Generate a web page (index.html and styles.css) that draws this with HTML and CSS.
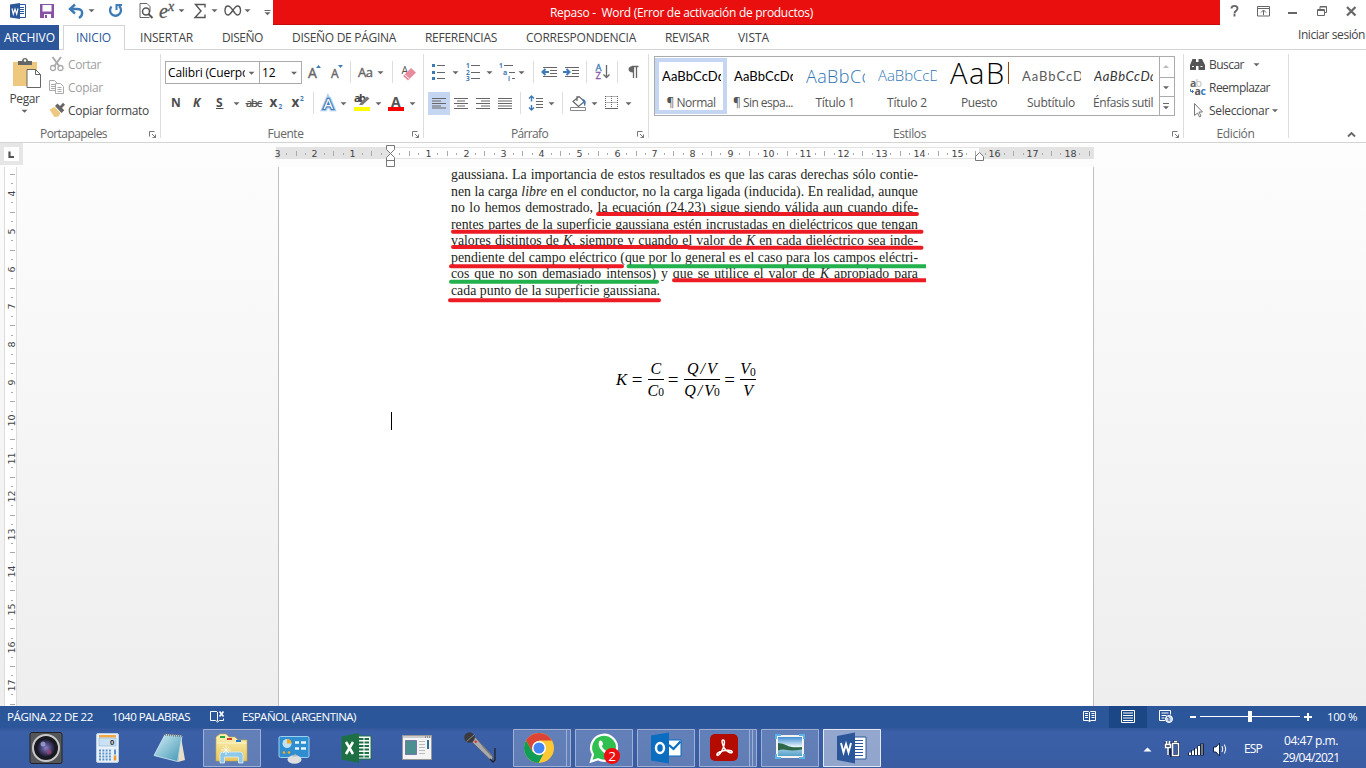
FILE: index.html
```html
<!DOCTYPE html>
<html lang="es">
<head>
<meta charset="utf-8">
<title>Repaso - Word</title>
<link rel="stylesheet" href="styles.css">
</head>
<body>
<svg class="defs" width="0" height="0">
  <defs>
    <path id="dd" d="M-3-1.2h6L0 1.8z" fill="#666"/>
    <g id="launch" fill="none" stroke="#777"><path d="M.5 5.500V.5h5"/><path d="M3 3l3.500 3.500M6.500 3.500v3h-3"/></g>
    <linearGradient id="folder" x1="0" y1="0" x2="0" y2="1"><stop offset="0" stop-color="#fdf3b8"/><stop offset="1" stop-color="#e8c65c"/></linearGradient>
    <linearGradient id="note" x1="0" y1="0" x2="1" y2="1"><stop offset="0" stop-color="#d5f0f7"/><stop offset="1" stop-color="#3f95b3"/></linearGradient>
    <linearGradient id="photo" x1="0" y1="0" x2="0" y2="1"><stop offset="0" stop-color="#2f83cf"/><stop offset=".5" stop-color="#e6f4fb"/><stop offset=".65" stop-color="#8fc3dd"/><stop offset="1" stop-color="#4f9cc6"/></linearGradient>
    <radialGradient id="lens"><stop offset="0" stop-color="#8a7fc4"/><stop offset=".5" stop-color="#4a4478"/><stop offset="1" stop-color="#14141f"/></radialGradient>
  </defs>
</svg>
<div class="app">
  <header class="titlebar">
    <svg width="273" height="25" viewBox="0 0 273 25">
      <path d="M18 4.500h7.500v13H18" fill="#fff" stroke="#2b579a"/><path d="M20 7.500h4M20 9.500h4M20 11.500h4M20 13.500h4" stroke="#2b579a"/>
      <path d="M10 4.500l10-1.500v16l-10-1.500z" fill="#2b579a"/><path d="M12 8.500l1.300 5.500 1.700-5 1.700 5 1.300-5.500" fill="none" stroke="#fff" stroke-width="1.200"/>
      <path d="M40 4h14v14H40z" fill="#8653a7"/><path d="M42.500 5h9v6.500h-9zM44 14h7v4h-7z" fill="#fff"/><path d="M45 15h2v3h-2z" fill="#8653a7"/>
      <path d="M75 4.500l-5 4.500 5 4.500M70.500 9H77c7 0 6 6.500 2 9" fill="none" stroke="#3e7ab5" stroke-width="2.400"/>
      <use href="#dd" x="91.500" y="10.500"/>
      <path d="M111.500 6.500a5.500 5.500 0 1 0 7.500-.5" fill="none" stroke="#3e7ab5" stroke-width="2.300"/><path d="M115.500 5h6.500M116.500 4v6" fill="none" stroke="#3e7ab5" stroke-width="2"/>
      <path d="M149.500 17.500h-9.500v-14h7l3 3v5" fill="none" stroke="#666"/><circle cx="146" cy="11.500" r="3.500" fill="none" stroke="#555" stroke-width="1.500"/><path d="M148.500 14l4 4" stroke="#555" stroke-width="2"/>
      <text class="serif" x="159" y="17.500" font-size="20" font-style="italic" fill="#555" stroke="#555" stroke-width=".3">e</text><text class="serif" x="168" y="10.500" font-size="14" font-style="italic" fill="#555" stroke="#555" stroke-width=".3">x</text>
      <use href="#dd" x="181.500" y="10.500"/>
      <path d="M205 7.500V4.500h-9.500l5.500 6.500-6 6.500h10v-3" fill="none" stroke="#555" stroke-width="1.400"/>
      <use href="#dd" x="214.500" y="10.500"/>
      <path d="M233 10.500c-2-3-3.500-4.500-5-4.500-4 0-4 9 0 9 3.500 0 6-9 9.500-9 4 0 4 9 0 9-1.500 0-2.500-1.500-4.500-4.500z" fill="none" stroke="#555" stroke-width="1.400"/>
      <use href="#dd" x="247.500" y="10.500"/>
      <path d="M264.500 10.500h6" stroke="#666"/><use href="#dd" x="267.500" y="13.500"/>
    </svg>
    <div class="doc-title"><span class="fit" data-w="263">Repaso -&nbsp; Word (Error de activación de productos)</span></div>
    <svg width="146" height="25" viewBox="1220 0 146 25" fill="none" stroke="#666">
      <path d="M1231.500 8.500c0-3.500 6-3.500 6 0 0 2.500-3 2-3 5M1234.500 14v2.500" stroke-width="1.900"/>
      <path d="M1257.500 6.500h12v9.500h-12zM1257.500 8.500h12M1263.500 15v-4.500M1261 12.500l2.500-2.500 2.500 2.500"/>
      <path d="M1288 13h9" stroke-width="2"/>
      <path d="M1317.500 9.500h7v6h-7zM1317 10.500h8M1320 9V6.500h6.500v6H1325M1320 7h6.500"/>
      <path d="M1347 7l8.500 8.500M1355.500 7l-8.500 8.500" stroke-width="2.200"/>
    </svg>
  </header>

  <nav class="tabs">
    <div class="tab-file"><span class="fit" data-w="51">ARCHIVO</span></div>
    <div class="tab-active"><span class="fit" data-w="35">INICIO</span></div>
    <div class="tab-list">
      <span class="fit" data-w="53">INSERTAR</span><span class="fit" data-w="41">DISEÑO</span><span class="fit" data-w="104">DISEÑO DE PÁGINA</span><span class="fit" data-w="72">REFERENCIAS</span><span class="fit" data-w="110">CORRESPONDENCIA</span><span class="fit" data-w="44">REVISAR</span><span class="fit" data-w="31">VISTA</span>
    </div>
    <div class="signin"><span class="fit" data-w="67">Iniciar sesión</span></div>
  </nav>

  <section class="ribbon">
    <div class="group g-clip">
      <div class="body">
        <div class="paste">
          <svg width="50" height="42" viewBox="0 50 50 42">
            <path d="M13 62h24v24H13z" fill="#edc87e"/><path d="M18 65v-4h4c0-4 6-4 6 0h4v4z" fill="#666"/><circle cx="25" cy="60.500" r="1.200" fill="#fff"/>
            <path d="M27 69.500h8.500l5 5v13H27z" fill="#fff" stroke="#666"/><path d="M35.500 69.500v5h5" fill="none" stroke="#666"/>
          </svg>
          <span class="fit" data-w="30">Pegar</span>
          <svg width="50" height="8" viewBox="0 0 50 8"><use href="#dd" x="24.500" y="5"/></svg>
        </div>
        <div class="rows">
          <div class="cmd off"><svg width="20" height="23" viewBox="48 53 20 23" fill="none" stroke="#aaa"><path d="M52.500 57l7 9.500M61 57l-7 9.500" stroke-width="2"/><circle cx="53" cy="68" r="2.500" stroke-width="1.300"/><circle cx="60.500" cy="68" r="2.500" stroke-width="1.300"/></svg><span class="fit" data-w="33">Cortar</span></div>
          <div class="cmd off"><svg width="20" height="23" viewBox="48 76 20 23" fill="#fff" stroke="#aaa"><path d="M49.500 80.500h5l3 3v7h-8z"/><path d="M51 84.500h4M51 86.500h4M51 88.500h4"/><path d="M55.500 83.500h5l3 3v7h-8z"/><path d="M57.500 87.500h4M57.500 89.500h4M57.500 91.500h4"/></svg><span class="fit" data-w="35">Copiar</span></div>
          <div class="cmd"><svg width="20" height="23" viewBox="48 99 20 23"><path d="M49.500 109.500l5-2.500 6 6-2 3.500-4 .5z" fill="#edc87e"/><path d="M55 106l2.500-2.500 2.500 2.500 3-3.200 2 2-3 3.200 2.300 2.300-2.800 2.700z" fill="#666"/></svg><span class="fit" data-w="81">Copiar formato</span></div>
        </div>
      </div>
      <div class="glabel"><i></i><span class="fit" data-w="67">Portapapeles</span><svg width="13" height="16" viewBox="0 0 13 16"><use href="#launch" x="2" y="5"/></svg></div>
    </div>

    <div class="group g-font">
      <div class="line combos">
        <div class="combo font"><span>Calibri (Cuerpo)</span><svg width="14" height="21" viewBox="0 0 14 21"><use href="#dd" x="6.500" y="11"/></svg></div>
        <div class="combo size"><span>12</span><svg width="13" height="21" viewBox="0 0 13 21"><use href="#dd" x="6" y="11"/></svg></div>
        <svg class="ui" width="120" height="26" viewBox="302 60 120 26">
          <g fill="#666" stroke="#666" stroke-width=".4"><text x="308" y="78" font-size="14">A</text><text x="331" y="78" font-size="12">A</text><text x="358" y="76.500" font-size="13" textLength="15">Aa</text></g>
          <path d="M316 68l2.500-3 2.500 3zM338 65l2.500 3 2.500-3z" fill="#3e7ab5"/>
          <path d="M350.500 61v22M392.500 61v22" stroke="#ddd"/><use href="#dd" x="380.500" y="72.500"/>
          <text x="401.500" y="74" font-size="10.500" fill="#555">A</text><path d="M403 76l8-8 5 4.500-8 8z" fill="#e88b9c"/><path d="M404.500 74.500l5 4.500" stroke="#fff"/>
        </svg>
      </div>
      <div class="line">
        <svg class="ui" width="262" height="28" viewBox="161 89 262 28">
          <g fill="#4d4d4d" font-weight="bold" font-size="12"><text x="171" y="107">N</text><text x="193" y="107" font-style="italic">K</text><text x="216" y="107">S</text><text x="269.500" y="107" font-size="13.500">x</text><text x="291.500" y="107" font-size="13.500">x</text></g>
          <path d="M216 108.500h7.500" stroke="#4d4d4d"/><use href="#dd" x="236.500" y="103.500"/>
          <text x="246" y="107" font-size="11" fill="#444" textLength="16" stroke="#444" stroke-width=".2">abc</text><path d="M245.500 103.500h17" stroke="#555"/>
          <text x="278.500" y="109" font-size="6.500" font-weight="bold" fill="#3e7ab5">2</text><text x="300" y="101" font-size="6.500" font-weight="bold" fill="#3e7ab5">2</text>
          <path d="M313.500 92v22" stroke="#ddd"/>
          <text x="323.500" y="108.500" font-size="15" fill="#fff" stroke="#a9caee" stroke-width="4.500" paint-order="stroke">A</text><text x="323.500" y="108.500" font-size="15" fill="#fff" stroke="#3e7ab5" stroke-width="2.200" paint-order="stroke">A</text>
          <use href="#dd" x="343.500" y="103.500"/>
          <text x="354" y="102" font-size="11" font-weight="bold" fill="#444" textLength="12">ab</text><path d="M359 105l2-3 6-5.500 2.500 2-7 6.500z" fill="#777"/><path d="M354 107h16v4h-16z" fill="#ff0"/>
          <use href="#dd" x="378.500" y="103.500"/>
          <text x="391" y="107" font-size="14" font-weight="bold" fill="#555">A</text><path d="M388 107h16v4h-16z" fill="red"/><use href="#dd" x="412.500" y="103.500"/>
        </svg>
      </div>
      <div class="glabel"><i></i><span class="fit" data-w="36">Fuente</span><svg width="13" height="16" viewBox="0 0 13 16"><use href="#launch" x="2" y="5"/></svg></div>
    </div>

    <div class="group g-para">
      <div class="line">
        <svg class="ui" width="224" height="26" viewBox="424 60 224 26" fill="none" stroke="#666">
          <path d="M437 65.500h8M437 72.500h8M437 78.500h8"/><path d="M432 65.500h3M432 72.500h3M432 78.500h3" stroke="#3e7ab5" stroke-width="3"/>
          <path d="M471 65.500h9M471 72.500h9M471 78.500h9"/><g fill="#3e7ab5" stroke="none" font-weight="bold" font-size="6.500"><text x="466" y="68">1</text><text x="466" y="74.500">2</text><text x="466" y="81">3</text><text x="499" y="68">1</text><text x="503" y="74.500" font-size="7">a</text><text x="508" y="81">i</text></g>
          <path d="M504 65.500h9M509 72.500h6M512 78.500h3"/>
          <use href="#dd" x="455.500" y="72.500" stroke="none"/><use href="#dd" x="489.500" y="72.500" stroke="none"/><use href="#dd" x="521.500" y="72.500" stroke="none"/>
          <path d="M533.500 61v22M586.500 61v22M617.500 61v22" stroke="#ddd"/>
          <path d="M543 67.500h14M550 70.500h7M550 73.500h7M543 76.500h14M565 67.500h14M572 70.500h7M572 73.500h7M565 76.500h14"/>
          <path d="M549 72H543M545.500 69l-3 3 3 3M563 72h6M566.500 69l3 3-3 3" stroke="#3e7ab5" stroke-width="2"/>
          <g stroke-width=".3" font-size="9.500"><text x="595.500" y="71" fill="#3e7ab5" stroke="#3e7ab5">A</text><text x="595.500" y="79" fill="#8653a7" stroke="#8653a7">Z</text></g><path d="M606.500 65v12M603.500 74.500l3 3 3-3" stroke-width="1.300"/>
          <path d="M633.500 78V66.500M636.500 78V66.500M632 66.500h6.500" stroke-width="1.300"/><path d="M633 66c-6 0-6 6.500 0 6.500z" fill="#666" stroke="none"/>
        </svg>
      </div>
      <div class="line">
        <svg width="224" height="28" viewBox="424 89 224 28" fill="none" stroke="#666">
          <path d="M428 92h22v23h-22z" fill="#c5d6f2" stroke="none"/>
          <path d="M432 98.500h14M432 101h9M432 103.500h14M432 106h9M432 108h14M454 98.500h14M457 101h8M454 103.500h14M457 106h8M454 108.500h14M476 98.500h14M481 101h9M476 103.500h14M481 106h9M476 108.500h14M498 98.500h14M498 101h14M498 103.500h14M498 106h14M498 108.500h14"/>
          <path d="M520.500 92v22M562.500 92v22" stroke="#ddd"/>
          <path d="M536 98.500h7M536 101.500h7M536 104.500h7M536 107.500h7"/><path d="M531.500 96.500v5M531.500 105v5M529 98.500l2.500-2.500 2.500 2.500M529 107.500l2.500 2.500 2.500-2.500" stroke="#3e7ab5" stroke-width="1.400"/>
          <path d="M573 101.500l6-5 5.500 5-6 5zM577 101v-5" stroke-width="1.200"/><path d="M582 99c3.500-.5 5 4 2.500 7.500l-1-4z" fill="#3e7ab5" stroke="none"/><path d="M570.500 107.500h15v3h-15z" stroke="#888"/>
          <path d="M605.500 96.500h12M605.500 102.500h12M605.500 96v12M611.500 96v12M617.500 96v12" stroke-dasharray="1 1"/><path d="M605 108.500h13"/>
          <use href="#dd" x="551.500" y="103.500" stroke="none"/><use href="#dd" x="594.500" y="103.500" stroke="none"/><use href="#dd" x="628.500" y="103.500" stroke="none"/>
        </svg>
      </div>
      <div class="glabel"><i></i><span class="fit" data-w="37">Párrafo</span><svg width="13" height="16" viewBox="0 0 13 16"><use href="#launch" x="2" y="5"/></svg></div>
    </div>

    <div class="group g-styles">
      <div class="gallery">
        <div class="style sel"><svg class="cal" width="59" height="35" viewBox="0 0 59 35"><text x="0" y="24" font-size="13" textLength="63">AaBbCcDd</text></svg><span class="fit" data-w="49">¶ Normal</span></div>
        <div class="style"><svg class="cal" width="59" height="35" viewBox="0 0 59 35"><text x="0" y="24" font-size="13" textLength="63">AaBbCcDd</text></svg><span class="fit" data-w="60">¶ Sin espa...</span></div>
        <div class="style"><svg class="cal light blue" width="59" height="35" viewBox="0 0 59 35"><text x="0" y="26" font-size="18" textLength="64">AaBbCc</text></svg><span class="fit" data-w="39">Título 1</span></div>
        <div class="style"><svg class="cal light blue" width="59" height="35" viewBox="0 0 59 35"><text x="0" y="24" font-size="15" textLength="62">AaBbCcD</text></svg><span class="fit" data-w="40">Título 2</span></div>
        <div class="style"><svg class="cal light" width="59" height="35" viewBox="0 0 59 35"><text x="0" y="26.500" font-size="29" textLength="73">AaBb</text></svg><span class="fit" data-w="36">Puesto</span></div>
        <div class="style"><svg class="cal gray" width="59" height="35" viewBox="0 0 59 35"><text x="0" y="24" font-size="13" textLength="61">AaBbCcD</text></svg><span class="fit" data-w="48">Subtítulo</span></div>
        <div class="style"><svg class="cal" width="59" height="35" viewBox="0 0 59 35"><text x="0" y="24" font-size="13" font-style="italic" textLength="63" fill="#333">AaBbCcDd</text></svg><span class="fit" data-w="60">Énfasis sutil</span></div>
        <svg class="scroll" width="15" height="58" viewBox="0 0 15 58"><path d="M.5 0v58M0 20.500h15M0 39.500h15" stroke="#ababab"/><path d="M4 11h6L7 8z" fill="#bbb"/><use href="#dd" x="7" y="30.500"/><path d="M4 46.500h6" stroke="#666"/><use href="#dd" x="7" y="50.500"/></svg>
      </div>
      <div class="glabel"><i></i><span class="fit" data-w="33">Estilos</span><svg width="13" height="16" viewBox="0 0 13 16"><use href="#launch" x="2" y="5"/></svg></div>
    </div>

    <div class="group g-edit">
      <div class="rows">
        <div class="cmd"><svg width="20" height="23" viewBox="1189 53 20 23"><path d="M1190 70v-5l2.500-6h3.500v11zM1198.500 70V59h3.500l3 6v5z" fill="#555"/><path d="M1195 62h5v4h-5z" fill="#555"/><path d="M1192 66.500h2M1200.500 66.500h2" stroke="#fff"/></svg><span class="fit" data-w="35">Buscar</span><svg width="22" height="23"><use href="#dd" x="12.500" y="11.500"/></svg></div>
        <div class="cmd"><svg class="ui" width="20" height="23" viewBox="1189 76 20 23"><g font-size="10.500" font-weight="bold"><text x="1190" y="87" fill="#666">a</text><text x="1195.500" y="87" fill="#bbb" font-weight="normal">b</text><text x="1194.500" y="94.500" fill="#555">a</text><text x="1200.500" y="94.500" fill="#3e7ab5">c</text></g><path d="M1190.500 89v2.500h3M1192 90l1.500 1.500-1.500 1.500" fill="none" stroke="#3e7ab5"/></svg><span class="fit" data-w="61">Reemplazar</span></div>
        <div class="cmd"><svg width="20" height="23" viewBox="1189 99 20 23"><path d="M1194.500 103.500v12l3-2.500 2 4 1.500-1-2-4h3.500z" fill="#fff" stroke="#777"/></svg><span class="fit" data-w="60">Seleccionar</span><svg width="10" height="23"><use href="#dd" x="6" y="11.500"/></svg></div>
      </div>
      <div class="glabel"><span class="fit" data-w="38">Edición</span></div>
    </div>
    <svg class="collapse" width="77" height="92" viewBox="1289 50 77 92"><path d="M1348 136.500l3.500-3.500 3.500 3.500" fill="none" stroke="#666" stroke-width="1.800"/></svg>
  </section>

  <main class="workspace">
    <div class="hruler-row">
      <div class="corner"><div><svg width="14" height="14"><path d="M5.500 4.500v5.500H10" fill="none" stroke="#555" stroke-width="2.200"/></svg></div></div>
      <svg id="hruler" class="ruler" width="830" height="24" viewBox="270 143 830 24">
        <path d="M276 147h818v12H276z" fill="#e3e3e3"/><path d="M390 148h589v10H390z" fill="#fff"/>
      </svg>
    </div>
    <div class="view">
      <svg id="vruler" class="ruler" width="24" height="539" viewBox="0 167 24 539"><path d="M4.500 167v539M16.500 167v539" stroke="#dcdcdc"/><path d="M5 167h11v539H5z" fill="#fff"/></svg>
      <article class="page">
        <div class="excerpt">
          <p>gaussiana. La importancia de estos resultados es que las caras derechas sólo contie-</p>
          <p>nen la carga <em>libre</em> en el conductor, no la carga ligada (inducida). En realidad, aunque</p>
          <p>no lo hemos demostrado, la ecuación (24.23) sigue siendo válida aun cuando dife-</p>
          <p>rentes partes de la superficie gaussiana estén incrustadas en dieléctricos que tengan</p>
          <p>valores distintos de <em>K</em>, siempre y cuando el valor de <em>K</em> en cada dieléctrico sea inde-</p>
          <p>pendiente del campo eléctrico (que por lo general es el caso para los campos eléctri-</p>
          <p>cos que no son demasiado intensos) y que se utilice el valor de <em>K</em> apropiado para</p>
          <p class="last">cada punto de la superficie gaussiana.</p>
          <svg class="marks" width="480" height="139" viewBox="446 167 480 139" fill="none" stroke="#ed1c24" stroke-width="4" stroke-linecap="round">
            <path d="M598 213.900h319M453 231.800h468.500M453 247h236M689 247.700h232.500M451 266.200h171M674 280.200h252M450 300.300h209"/>
            <path d="M628.500 266.200h297.500M451 281.800h206" stroke="#22b14c"/>
          </svg>
        </div>
        <div class="equation">
          <span class="k">K</span><span class="eq">=</span>
          <span class="frac f1"><span>C</span><span>C<sub>0</sub></span></span><span class="eq">=</span>
          <span class="frac f2"><span>Q<b>/</b>V</span><span>Q<b>/</b>V<sub>0</sub></span></span><span class="eq">=</span>
          <span class="frac f3"><span>V<sub>0</sub></span><span>V</span></span>
        </div>
        <div class="caret"></div>
      </article>
    </div>
  </main>

  <footer class="status">
    <span class="fit" data-w="86">PÁGINA 22 DE 22</span><span class="fit words" data-w="78">1040 PALABRAS</span>
    <svg width="52" height="22" viewBox="191 706 52 22" fill="none" stroke="#fff"><path d="M218 711.500h-6.500v9h5l2 1.500 2-1.500h4v-2M218.500 712v9"/><path d="M220.500 711.500l4 5M224.500 711.500l-4 5" stroke-width="1.600"/></svg>
    <span class="fit" data-w="114">ESPAÑOL (ARGENTINA)</span>
    <svg class="viewtools" width="253" height="22" viewBox="1074 706 253 22" fill="none" stroke="#fff">
      <path d="M1109 706h38v22h-38z" fill="#1b4787" stroke="none"/>
      <path d="M1083.500 711.500h5l1 1 1-1h5v9h-5l-1 1.500-1-1.500h-5zM1089.500 712v10M1085 713.500h3M1085 715.500h3M1085 717.500h3M1091.500 713.500h3M1091.500 715.500h3M1091.500 717.500h3"/>
      <path d="M1121.500 710.500h13v12h-13zM1123 713h10M1123 715.500h10M1123 718h10M1123 720.500h10"/>
      <path d="M1165 720.500h-5.500v-10h11v4M1161.500 713h7M1161.500 715.500h5M1161.500 718h3"/><circle cx="1169" cy="719" r="3.500" fill="#c6d2e6"/><path d="M1167 717l2 1v3" stroke="#2b579a"/>
      <path d="M1190 717h6M1304 717h8M1308 713v8" stroke-width="2"/><path d="M1200 716.500h100"/><path d="M1248 711h4v11h-4z" fill="#fff" stroke="none"/>
    </svg>
    <span class="fit" data-w="30">100 %</span>
  </footer>

  <footer class="taskbar">
    <svg width="1230" height="40" viewBox="0 728 1230 40">
      <g fill="#fff" fill-opacity=".2" stroke="#9fb0d4"><path d="M203.500 729.500h57v37h-57zM513.500 729.500h53v37h-53zM575.500 729.500h57v37h-57zM637.500 729.500h57v37h-57zM699.500 729.500h50v37h-50zM761.500 729.500h57v37h-57z"/><path d="M566.500 729.500h4v37h-4zM749.500 729.500h3v37h-3zM752.500 729.500h4v37h-4z"/><path d="M823.500 729.500h57v37h-57z" fill-opacity=".45" stroke="#e3e8f3"/></g>
      <!-- webcam -->
      <rect x="30" y="732.500" width="32" height="31" rx="2" fill="#55565a" stroke="#222"/><circle cx="46" cy="748" r="13" fill="#191a1f" stroke="#c8c8ca" stroke-width="2"/><circle cx="46" cy="748" r="9.500" fill="url(#lens)"/><circle cx="43" cy="744" r="2.500" fill="#a9b8e8" opacity=".7"/><circle cx="49" cy="752" r="2.500" fill="#a04570" opacity=".7"/>
      <!-- calculator -->
      <rect x="96.500" y="733.500" width="22" height="29" rx="1.500" fill="#e8f1f9" stroke="#b9cde0"/><path d="M99 735h17v2.500H99z" fill="#f5a742"/><path d="M99 738h17v8H99z" fill="#c9e1f3" stroke="#8eb1d0" stroke-width=".6"/><text class="uit" x="110" y="745" font-size="7.500" font-weight="bold" fill="#333">0</text><path d="M99 750.500h13M99 753.500h13M99 756.500h13M99 759.500h13" stroke="#5b94c9" stroke-width="2" stroke-dasharray="2 1.300"/><path d="M115 749.500v5" stroke="#5b94c9" stroke-width="2"/><path d="M115 755.500v5" stroke="#f09a2a" stroke-width="2.500"/>
      <!-- notepad -->
      <path d="M181 737l4 23-7 2z" fill="#e9dfc6"/><path d="M165 734.500l17 1.500-4.500 25.500-23.500-6z" fill="url(#note)" stroke="#d7eaf0" stroke-width=".8"/><path d="M165 734.500l17 1.500" stroke="#777" stroke-width="2.500" stroke-dasharray="1 1"/>
      <!-- file explorer -->
      <path d="M216 741v-4l4-3h6l3 3h6l3 3h9v21h-31z" fill="url(#folder)" stroke="#c9a548" stroke-width=".6"/><path d="M220 737h5" stroke="#28a745" stroke-width="2"/><path d="M227 739h5" stroke="#d83b2c" stroke-width="2"/><path d="M236 741h5" stroke="#1e7bd0" stroke-width="2"/><path d="M217 743h29" stroke="#fff7cf"/><path d="M220 763v-8q0-3 3-3h17q3 0 3 3v8h-4.500v-6h-14v6z" fill="#8fc9ea" stroke="#d9f0fb" stroke-width=".8"/><path d="M226 745v10M221 750h10M223 747l6 6M229 747l-6 6" stroke="#fff" stroke-width=".7"/>
      <!-- control panel -->
      <rect x="279" y="736.500" width="30" height="21" rx="1.500" fill="#2f8ed0" stroke="#9bd0f0"/><circle cx="287" cy="743.500" r="4.500" fill="#bfe2f7"/><path d="M287 743.500v-4.500a4.500 4.500 0 0 1 4.500 4.500z" fill="#f7a823"/><path d="M295 742.500h4M301 742.500h5M295 748.500h4M301 748.500h5" stroke="#e9f6fd" stroke-width="2.300"/><circle cx="284" cy="752.500" r="1.300" fill="#f7a823"/><circle cx="289" cy="752.500" r="1.300" fill="#f7a823"/><ellipse cx="294.500" cy="759.500" rx="7" ry="4.300" fill="#dedede"/><path d="M292 757l3-3 3 2z" fill="#bbb"/>
      <!-- excel -->
      <path d="M358 736h13v23h-13z" fill="#fff" stroke="#1d7044"/><path d="M359 739h10M359 742.500h10M359 746h10M359 749.500h10M359 753h10M359 756.500h10" stroke="#1d7044" stroke-width="1.800" stroke-dasharray="4.500 1"/><path d="M341.500 736.500l17.500-3.500v30l-17.500-3.500z" fill="#1d7044"/><path d="M346 742l7 12M353 742l-7 12" stroke="#fff" stroke-width="2.500"/>
      <!-- window app -->
      <path d="M402.500 735.500h29v24h-29z" fill="#f4f4f4" stroke="#999"/><path d="M403 737h28" stroke="#ccc" stroke-width="2"/><path d="M425 737h5" stroke="#555" stroke-dasharray="1 1"/><path d="M405.500 740.500h11v14h-11z" fill="#4b9090" stroke="#77a"/><path d="M419 741.500h6M419 744.500h6M419 747.500h6M419 750.500h6M419 753.500h6" stroke="#bbb"/><path d="M428 740v9" stroke="#2f6e9b" stroke-width="2"/>
      <!-- microphone -->
      <path d="M471 741l4-4 18 20-1.500 4z" fill="#a9aaad" stroke="#555" stroke-width=".7"/><circle cx="469.500" cy="737.500" r="5.300" fill="#3a3a3c"/><path d="M466.500 741.500l8-7" stroke="#888"/><path d="M475 741l1.500 1.500" stroke="#e22" stroke-width="2"/><path d="M482 745l10 11" stroke="#777" stroke-width="1.500"/><path d="M490 759l3 3 2-2v-12" fill="none" stroke="#222" stroke-width="1.300"/>
      <!-- chrome -->
      <circle cx="539" cy="748" r="15" fill="#fcc934"/><path d="M526 740.500a15 15 0 0 1 26 0H539z" fill="#db4437"/><path d="M526 740.500l6.500 11.300 1-8 5.500-3.300 1-4z" fill="#db4437"/><path d="M526 740.500l6.500 11.300 6.500 3.700 4.500-1.500-5 9a15 15 0 0 1-12.500-22.500z" fill="#0f9d58"/><circle cx="539" cy="748" r="7" fill="#fff"/><circle cx="539" cy="748" r="5.500" fill="#4285f4"/>
      <!-- whatsapp -->
      <path d="M591 761.500l2-7a13 13 0 1 1 5 4.700z" fill="#2fc04f" stroke="#fff" stroke-width="2.200"/><path d="M599 741.500c2-2 3-1 4 2 .5 1.500-1.500 2-1 3 1 2 2.500 3.500 5 4.500 1 .2 1.500-2 2.500-1.500 3 1.500 4 2 2 4-4 4.500-15-5-12.500-12z" fill="#fff"/><circle cx="612" cy="756" r="8" fill="#f00f0f"/><text class="uit" x="608.300" y="760.700" font-size="13.500" fill="#fff">2</text>
      <!-- outlook -->
      <path d="M668 740h13v16h-13z" fill="#fff" stroke="#0a6dc0"/><path d="M669 745l4.500 4 7-7.500" fill="none" stroke="#0a6dc0" stroke-width="2.200"/><path d="M651 735.500l18-3v31l-18-3z" fill="#0a6dc0"/><ellipse cx="660" cy="748" rx="4" ry="5" fill="none" stroke="#fff" stroke-width="2.500"/>
      <!-- acrobat -->
      <rect x="710" y="734" width="28" height="27" rx="5" fill="#b30b00"/><path d="M723 740c-2 0-.5 5 1.500 8.500 2 3 6.500 5 7.500 4 1-1.500-2-2.500-5-2.200-5 .2-10.500 2.200-10 4.700.5 1.500 4-1.500 6-6.500 1.800-4.500 2-8.500 0-8.500z" fill="none" stroke="#fff" stroke-width="1.500"/>
      <!-- pictures -->
      <path d="M777 736h26v21h-26z" fill="url(#photo)" stroke="#f3f3f0" stroke-width="2"/><path d="M778 743q5 0 9 2.500t15 1.500v2.500q-10 1.500-15 .5t-9 .5z" fill="#2f6848"/><path d="M776 739v-4h5M799 735h5v4M776 754v4h5M799 758h5v-4" fill="none" stroke="#5cb3e5" stroke-width="2"/>
      <!-- word -->
      <path d="M853 737h13v22h-13z" fill="#fff" stroke="#2b579a"/><path d="M855 740.500h8M855 743.500h8M855 746.500h8M855 749.500h8M855 752.500h8M855 755.500h8" stroke="#2b579a" stroke-width="1.200"/><path d="M837 736l18-3.500v31l-18-3.500z" fill="#2b579a"/><path d="M841 743l2.500 9.500 2.500-8.500 2.500 8.500 2.500-9.500" fill="none" stroke="#fff" stroke-width="1.900"/>
      <!-- tray -->
      <path d="M1143.500 751.500h8l-4-4z" fill="#fff"/>
      <g fill="none" stroke="#14254a" stroke-width="3"><path d="M1171.500 743.500h7v12h-7zM1173.500 741.500h3"/><path d="M1166 742v4.500h5V742M1168.500 747v8"/></g>
      <path d="M1172.500 743.500h6v12h-6zM1174 741.500h3" fill="none" stroke="#fff" stroke-width="1.500"/><path d="M1165.500 744.500h5v3h-5zM1166.500 741v4M1169.500 741v4M1168 747v8" fill="none" stroke="#fff" stroke-width="1.500"/>
      <g stroke="#14254a" stroke-width="4"><path d="M1190 752.500v3M1193 750v5.500M1196 748v7.500M1199.500 745.500v10M1202 743.500v12"/></g><g stroke="#fff" stroke-width="2"><path d="M1190 752.500v2.500M1193 750.500v4.500M1196 748.500v6.500M1199 746v9"/><path d="M1202 744v11" stroke="#777"/></g>
      <path d="M1213.500 747h2.500l3.500-4v13l-3.500-4h-2.500z" fill="#fff" stroke="#14254a"/><path d="M1222 746q1.500 3 0 6M1224.500 744.500q2.500 4.500 0 9" fill="none" stroke="#fff"/>
    </svg>
    <div class="lang"><span class="fit" data-w="18">ESP</span></div>
    <div class="clock"><span class="fit" data-w="54">04:47 p.m.</span><span class="fit" data-w="57">29/04/2021</span></div>
  </footer>
</div>
<script src="script.js"></script>
</body>
</html>
```

FILE: styles.css
```css
* { box-sizing: border-box; }
html, body { margin: 0; height: 100%; overflow: hidden; }
body { font-family: "Open Sans", "Noto Sans", sans-serif; font-size: 12px; color: #444; }
svg { display: block; flex: none; }
.defs { position: absolute; }
.serif { font-family: "Liberation Serif", serif; }
.ui, .uit { font-family: "Open Sans", sans-serif; }
.fit { white-space: nowrap; flex: none; }
.app { width: 1366px; height: 768px; display: flex; flex-direction: column; background: #fff; }

.titlebar { display: flex; height: 25px; }
.doc-title { width: 947px; padding-right: 130px; background: #e90f0f; border-bottom: 1px solid #c40c0c; color: #fff; display: flex; justify-content: center; line-height: 25px; }

.tabs { display: flex; height: 25px; border-bottom: 1px solid #d4d4d4; line-height: 25px; }
.tab-file { width: 59px; height: 25px; background: #2b579a; color: #fff; padding-left: 4px; }
.tab-active { width: 62px; height: 25px; margin-left: 4px; background: #fff; border: 1px solid #d4d4d4; border-bottom: 0; padding-left: 12px; line-height: 24px; color: #2b579a; }
.tab-list { display: flex; gap: 29px; margin-left: 15px; }
.signin { margin-left: auto; padding-right: 1px; line-height: 19px; }

.ribbon { display: flex; height: 93px; border-bottom: 1px solid #d4d4d4; }
.group { height: 92px; display: flex; flex-direction: column; background: linear-gradient(#ddd, #ddd) right 4px / 1px 84px no-repeat; }
.g-clip { width: 161px; }
.g-font { width: 263px; }
.g-para { width: 225px; }
.g-styles { width: 535px; }
.g-edit { width: 105px; padding-left: 5px; }
.body { display: flex; }
.paste { width: 48px; padding-left: 1px; display: flex; flex-direction: column; align-items: center; line-height: 14px; }
.paste svg { margin-right: -1px; }
.rows { padding-top: 3px; width: 100px; }
.cmd { display: flex; height: 23px; line-height: 23px; }
.off { color: #a0a0a0; }
.glabel { margin-top: auto; height: 16px; display: flex; justify-content: space-between; line-height: 16px; color: #666; padding-right: 1px; }
.g-edit .glabel { justify-content: center; padding-right: 7px; }
.line { height: 28px; display: flex; }
.line:first-child { margin-top: 10px; }
.line + .line { margin-top: 1px; }
.combos { padding-left: 4px; }
.combo { height: 23px; margin-top: 1px; border: 1px solid #ababab; display: flex; line-height: 21px; color: #000; }
.combo span { flex: 1; overflow: hidden; white-space: nowrap; padding-left: 2px; }
.font { width: 95px; }
.font span { letter-spacing: -.15px; }
.size { width: 43px; margin-left: -1px; }

.gallery { display: flex; width: 521px; height: 60px; margin: 6px 0 0 5px; border: 1px solid #ababab; }
.style { width: 72px; display: flex; flex-direction: column; align-items: center; line-height: 20px; color: #555; }
.style .fit { margin-top: 1px; }
.sel { border: 4px solid #c5d6f2; margin: 1px 0; }
.sel svg { margin-top: -5px; }
.cal { font-family: Lato, sans-serif; fill: #000; }
.light { font-family: "Open Sans", sans-serif; font-weight: 300; }
.blue { fill: #2e74b5; }
.gray { fill: #5a5a5a; }
.scroll { margin-left: auto; }

.workspace { height: 563px; background: linear-gradient(#fdfdfd, #eee); }
.hruler-row { display: flex; height: 24px; }
.corner { width: 23px; height: 22px; background: #e6e6e6; margin-right: 247px; padding: 4px; }
.corner div { width: 15px; height: 14px; background: #fff; }
.ruler { font-family: "DejaVu Sans", sans-serif; font-size: 9.5px; }
.view { display: flex; height: 539px; }
.page { width: 816px; margin-left: 254px; background: #fff; border: solid #c0c0c0; border-width: 0 1px; padding-left: 111px; }
.excerpt { position: relative; width: 467px; margin-left: 61px; height: 139px; font-family: "Liberation Serif", serif; font-size: 13.8px; color: #231f20; }
.excerpt p { margin: 0; height: 16.55px; line-height: 15px; white-space: nowrap; text-align-last: justify; }
.excerpt .last { width: 209px; }
.marks { position: absolute; left: -5px; top: 0; }
.equation { display: flex; width: 144px; height: 40px; margin: 54px 0 0 226px; font: italic 16.5px/20px "Liberation Serif", serif; color: #000; align-items: center; }
.k { width: 16px; }
.eq { width: 12px; font-style: normal; font-size: 19px; }
.frac { display: flex; flex-direction: column; align-items: center; font-size: 16px; margin: 0 4px; }
.frac > span { display: flex; height: 19px; line-height: 18px; }
.frac > span + span { border-top: 1px solid #000; height: 21px; line-height: 22px; }
.frac b { font-weight: normal; padding: 0 2px; }
.frac sub { font: normal 11.5px/25px "Liberation Serif", serif; vertical-align: baseline; }
.f1 { width: 16px; }
.f2 { width: 37px; }
.f3 { width: 16px; }
.f1 > span, .f2 > span + span, .f3 > span { width: 100%; justify-content: center; }
.caret { width: 1px; height: 18px; background: #000; margin: 12px 0 0 1px; }

.status { display: flex; height: 22px; background: #2b579a; color: #fff; line-height: 22px; padding-left: 7px; font-size: 11.5px; }
.words { margin-left: 19px; }
.viewtools { margin-left: auto; }
.status > .fit:last-child { margin-right: 9px; }
.taskbar { display: flex; height: 40px; background: linear-gradient(#34579b, #3b60a8 4px, #395ca2); color: #fff; }
.lang { padding-left: 14px; width: 51px; line-height: 42px; }
.clock { display: flex; flex-direction: column; line-height: 17px; padding-top: 4px; width: 60px; align-items: center; }
```

FILE: script.js
```js
// Spread or tighten labels so that each takes its set width.
document.querySelectorAll('.fit').forEach(function (el) {
  var r = document.createRange();
  r.selectNodeContents(el);
  var diff = +el.dataset.w - r.getBoundingClientRect().width;
  el.style.letterSpacing = (diff / el.textContent.length) + 'px';
});

// Squeeze excerpt lines that run past the column.
document.querySelectorAll('.excerpt p').forEach(function (p) {
  var max = p.clientWidth;
  if (p.scrollWidth > max) {
    p.style.letterSpacing = ((max - p.scrollWidth - 1) / p.textContent.length) + 'px';
  }
});

var NS = 'http://www.w3.org/2000/svg';
function add(svg, name, attrs, text) {
  var e = document.createElementNS(NS, name);
  for (var k in attrs) e.setAttribute(k, attrs[k]);
  if (text) e.textContent = text;
  svg.appendChild(e);
}

// Horizontal ruler, in centimetres.
var h = document.getElementById('hruler'), unit = 37.77;
for (var q = -12; q <= 74; q++) {
  var x = Math.round(390 + q * unit / 4) + 0.5, m = ((q % 4) + 4) % 4;
  if (q === 0 || x > 1092) continue;
  if (m === 0) {
    add(h, 'text', { x: x, y: 157, 'text-anchor': 'middle', fill: '#444' }, String(Math.abs(q / 4)));
  } else if (m === 2) {
    add(h, 'path', { d: 'M' + x + ' 151v5', stroke: '#aaa' });
  } else {
    add(h, 'path', { d: 'M' + x + ' 153v2', stroke: '#aaa' });
  }
}
add(h, 'path', { d: 'M386.500 145.500h8v4l-4 4 4 4v9h-8v-9l4-4-4-4zM386.500 160.500h8', fill: '#fff', stroke: '#777' });
add(h, 'path', { d: 'M975.500 160.500v-4l4-4 4 4v4z', fill: '#fff', stroke: '#777' });

// Vertical ruler.
var v = document.getElementById('vruler');
for (q = 14; q <= 70; q++) {
  var y = Math.round(41.5 + q * 37.85 / 4) + 0.5;
  m = q % 4;
  if (m === 0) {
    add(v, 'text', { transform: 'translate(15 ' + y + ') rotate(-90)', 'text-anchor': 'middle', fill: '#444' }, String(q / 4));
  } else if (m === 2) {
    add(v, 'path', { d: 'M10 ' + y + 'h5', stroke: '#aaa' });
  } else {
    add(v, 'path', { d: 'M11 ' + y + 'h2', stroke: '#aaa' });
  }
}
```
